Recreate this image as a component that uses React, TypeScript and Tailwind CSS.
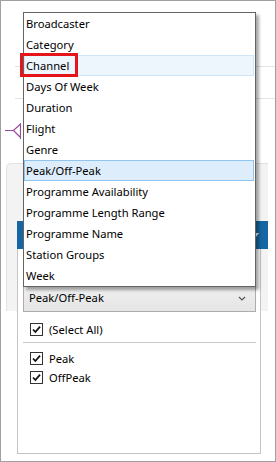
const fields = [
  "Broadcaster",
  "Category",
  "Channel",
  "Days Of Week",
  "Duration",
  "Flight",
  "Genre",
  "Peak/Off-Peak",
  "Programme Availability",
  "Programme Length Range",
  "Programme Name",
  "Station Groups",
  "Week",
];

function Check() {
  return (
    <span className="grid h-[13px] w-[13px] place-items-center border border-[#333] bg-white">
      <svg viewBox="0 0 11 11" className="h-[11px] w-[11px]" aria-hidden="true">
        <path d="M2 5.5 4.4 8 9 2.6" fill="none" stroke="#111" strokeWidth="1.8" />
      </svg>
    </span>
  );
}

function CheckRow({ label }: { label: string }) {
  return (
    <div className="flex h-[19px] items-center gap-[6px] pl-[12px]">
      <Check />
      <span>{label}</span>
    </div>
  );
}

export default function App() {
  return (
    <div className="relative h-[462px] w-[276px] overflow-hidden border border-[#a0a0a0] bg-white font-['Noto_Sans',sans-serif] text-[11.2px] leading-none text-black">
      {/* form behind the popup */}
      <div className="pt-[65px]">
        <div className="ml-[14px] h-[32px] border-t border-[#e4e4e4]" />
        <div className="ml-[14px] border-t border-[#e4e4e4]" />
        <div className="pl-[4px] pt-[24px]">
          <svg viewBox="0 0 16 16" className="h-[16px] w-[16px]" aria-hidden="true">
            <path d="M0 7.5h8.5L15 1.5M8.5 7.5 15 14M15.5 0v16" fill="none" stroke="#9c4aa0" strokeWidth="1.2" />
          </svg>
        </div>

        <div className="ml-[5px] mt-[24px] h-[148px] w-[262px] rounded-tl-[5px] border-l border-t border-[#e2e2e2] bg-[#f3f3f3] pl-[10px] pt-[57px]">
          <div className="flex h-[28px] items-center justify-end bg-[#1666a3] pr-[9px]">
            <span className="h-0 w-0 border-x-[3px] border-t-[4px] border-x-transparent border-t-white" />
          </div>
          <div className="h-[205px] w-[244px] border-x border-b border-[#c4c4c4] bg-white pt-[35px]">
            <div className="ml-[5px] flex h-[28px] w-[233px] items-center justify-between border border-[#acacac] bg-[linear-gradient(#f0f0f0,#e5e5e5)] pl-[5px] pr-[9px]">
              <span>Peak/Off-Peak</span>
              <svg viewBox="0 0 8 5" className="h-[5px] w-[8px]" aria-hidden="true">
                <path d="M1 1l3 3 3-3" fill="none" stroke="#555" strokeWidth="1.2" />
              </svg>
            </div>
            <div className="mt-[8px]">
              <CheckRow label="(Select All)" />
            </div>
            <div className="ml-[5px] mt-[3px] h-px w-[233px] bg-[#c8c8c8]" />
            <div className="mt-[6px]">
              <CheckRow label="Peak" />
              <CheckRow label="OffPeak" />
            </div>
          </div>
        </div>
      </div>

      {/* field list popup */}
      <div className="absolute left-[22px] top-[11px] w-[233px] border border-[#646464] bg-white shadow-[3px_3px_3px_rgba(0,0,0,0.35)]">
        {fields.map((f) => (
          <div
            key={f}
            className={
              f === "Channel"
                ? "mr-[1px] flex h-[21px] items-center border border-[#cfe5f8] bg-[#edf5fd] pl-[1px]"
                : f === "Peak/Off-Peak"
                  ? "mr-[1px] flex h-[21px] items-center border border-[#8ec4f0] bg-[#deedfc] pl-[1px]"
                  : "mr-[1px] flex h-[21px] items-center border border-transparent pl-[1px]"
            }
          >
            {f}
          </div>
        ))}
      </div>

      {/* annotation */}
      <div className="absolute left-[19px] top-[52px] h-[24px] w-[58px] border-[3px] border-[#e5141b]" />
    </div>
  );
}
